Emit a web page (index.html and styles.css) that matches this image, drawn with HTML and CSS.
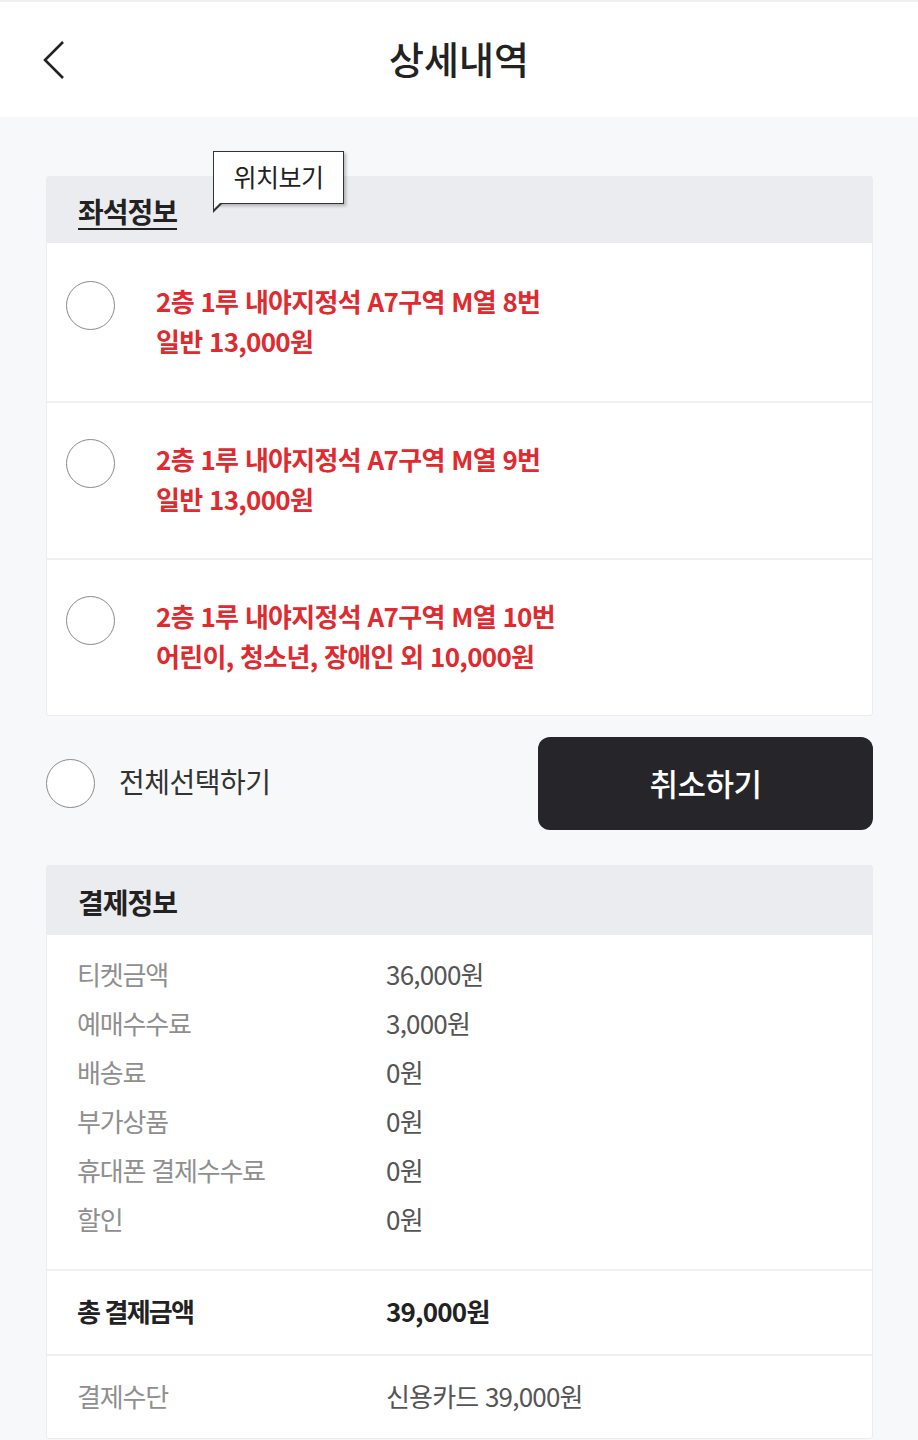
FILE: index.html
```html
<!DOCTYPE html>
<html lang="ko">
<head>
    <meta charset="UTF-8">
    <meta name="viewport" content="width=device-width, initial-scale=1.0">
    <title>상세내역</title>
    <link rel="stylesheet" href="styles.css">
</head>
<body>
    <div class="topbar">
        <a class="back" href="#">
            <svg width="24" height="40" viewBox="0 0 24 40"><path d="M21 2 L3 20 L21 38" fill="none" stroke="#222" stroke-width="2.6"/></svg>
        </a>
        <h1>상세내역</h1>
    </div>
    <div class="wrapper">
        <div class="card">
            <div class="cardHead">
                <h2 class="underline">좌석정보</h2>
                <div class="tip">위치보기</div>
            </div>
            <ul class="seats">
                <li>
                    <span class="check"></span>
                    <p>2층 1루 내야지정석 A7구역 M열 8번<br>일반 13,000원</p>
                </li>
                <li>
                    <span class="check"></span>
                    <p>2층 1루 내야지정석 A7구역 M열 9번<br>일반 13,000원</p>
                </li>
                <li>
                    <span class="check"></span>
                    <p>2층 1루 내야지정석 A7구역 M열 10번<br>어린이, 청소년, 장애인 외 10,000원</p>
                </li>
            </ul>
        </div>
        <div class="actions">
            <label class="all"><span class="check"></span>전체선택하기</label>
            <button class="cancel">취소하기</button>
        </div>
        <div class="card pay">
            <div class="cardHead">
                <h2>결제정보</h2>
            </div>
            <ul class="list">
                <li><span>티켓금액</span><em>36,000원</em></li>
                <li><span>예매수수료</span><em>3,000원</em></li>
                <li><span>배송료</span><em>0원</em></li>
                <li><span>부가상품</span><em>0원</em></li>
                <li><span>휴대폰 결제수수료</span><em>0원</em></li>
                <li><span>할인</span><em>0원</em></li>
            </ul>
            <div class="total"><span>총 결제금액</span><em>39,000원</em></div>
            <div class="method"><span>결제수단</span><em>신용카드 39,000원</em></div>
        </div>
    </div>
</body>
</html>
```

FILE: styles.css
```css
*{
    margin: 0;
    padding: 0;
    list-style: none;
    box-sizing: border-box;
}
body{
    background: #f7f8fa;
    font-family: "Noto Sans CJK KR", "Noto Sans", sans-serif;
    color: #222;
}
.topbar{
    position: relative;
    height: 117px;
    background: #fff;
    border-top: 2px solid #f0f0f2;
    display: flex;
    align-items: center;
    justify-content: center;
}
.topbar h1{
    font-size: 38px;
    font-weight: 500;
    letter-spacing: 0;
    margin-top: -4px;
}
.back{
    position: absolute;
    left: 42px;
    top: 38px;
}
.wrapper{
    padding: 59px 45px 0 46px;
}
.card{
    background: #fff;
    border: 1px solid #ececef;
    border-radius: 3px;
}
.cardHead{
    position: relative;
    height: 66px;
    background: #ebecef;
    padding-left: 31px;
    display: flex;
    align-items: center;
}
.cardHead h2{
    font-size: 28px;
    font-weight: 700;
    letter-spacing: -1px;
    margin-top: 2px;
}
.underline{
    text-decoration: underline;
    text-underline-offset: 5px;
    text-decoration-thickness: 2px;
}
.tip{
    position: absolute;
    left: 166px;
    top: -26px;
    height: 53px;
    width: 131px;
    background: #fff;
    border: 1.5px solid #333;
    box-shadow: 2px 2px 3px rgba(0,0,0,.25);
    font-size: 25px;
    text-align: center;
    line-height: 48px;
    letter-spacing: -0.5px;
}
.tip:after{
    content: "";
    position: absolute;
    left: -1.5px;
    bottom: -10px;
    width: 0;
    height: 0;
    border-left: 10px solid #333;
    border-bottom: 10px solid transparent;
}
.tip:before{
    content: "";
    position: absolute;
    left: 0;
    bottom: -6px;
    width: 0;
    height: 0;
    border-left: 7px solid #fff;
    border-bottom: 7px solid transparent;
    z-index: 1;
}
.seats li{
    height: 157px;
    display: flex;
    align-items: flex-start;
    padding: 36px 0 0 19px;
    border-top: 2px solid #f0f0f2;
}
.seats li:first-child{
    border-top: 0;
    height: 158px;
    padding-top: 38px;
}
.check{
    flex: none;
    width: 49px;
    height: 49px;
    border: 1.5px solid #8a8a8a;
    border-radius: 50%;
    background: #fff;
}
.seats p{
    margin-left: 41px;
    color: #df2a2f;
    font-size: 26px;
    font-weight: 700;
    line-height: 40px;
    letter-spacing: -0.7px;
}
.actions{
    display: flex;
    justify-content: space-between;
    align-items: center;
    margin-top: 21px;
}
.all{
    display: flex;
    align-items: center;
    font-size: 28px;
    color: #333;
    letter-spacing: -0.5px;
    padding-bottom: 6px;
}
.all .check{
    margin-top: 6px;
    margin-right: 24px;
}
.cancel{
    width: 335px;
    height: 93px;
    background: #25252a;
    border: 0;
    border-radius: 12px;
    color: #fff;
    font-family: inherit;
    font-size: 31px;
    font-weight: 500;
    letter-spacing: -0.5px;
    padding-bottom: 2px;
}
.pay{
    margin-top: 35px;
}
.pay .cardHead{
    height: 69px;
}
.list{
    padding: 14px 0 26px;
}
.list li, .total, .method{
    display: flex;
    align-items: center;
    padding-left: 30px;
    font-size: 26px;
    letter-spacing: -1.2px;
}
.list li{
    height: 49px;
}
.pay span{
    width: 309px;
    color: #8f8f8f;
}
.pay em{
    font-style: normal;
    color: #555;
    letter-spacing: -0.8px;
}
.total{
    height: 85px;
    border-top: 2px solid #f0f0f2;
    padding-bottom: 4px;
}
.total span, .total em{
    color: #222;
    font-weight: 700;
}
.total span{
    letter-spacing: -1.8px;
}
.method{
    height: 84px;
    border-top: 2px solid #f0f0f2;
    padding-bottom: 4px;
}
```
